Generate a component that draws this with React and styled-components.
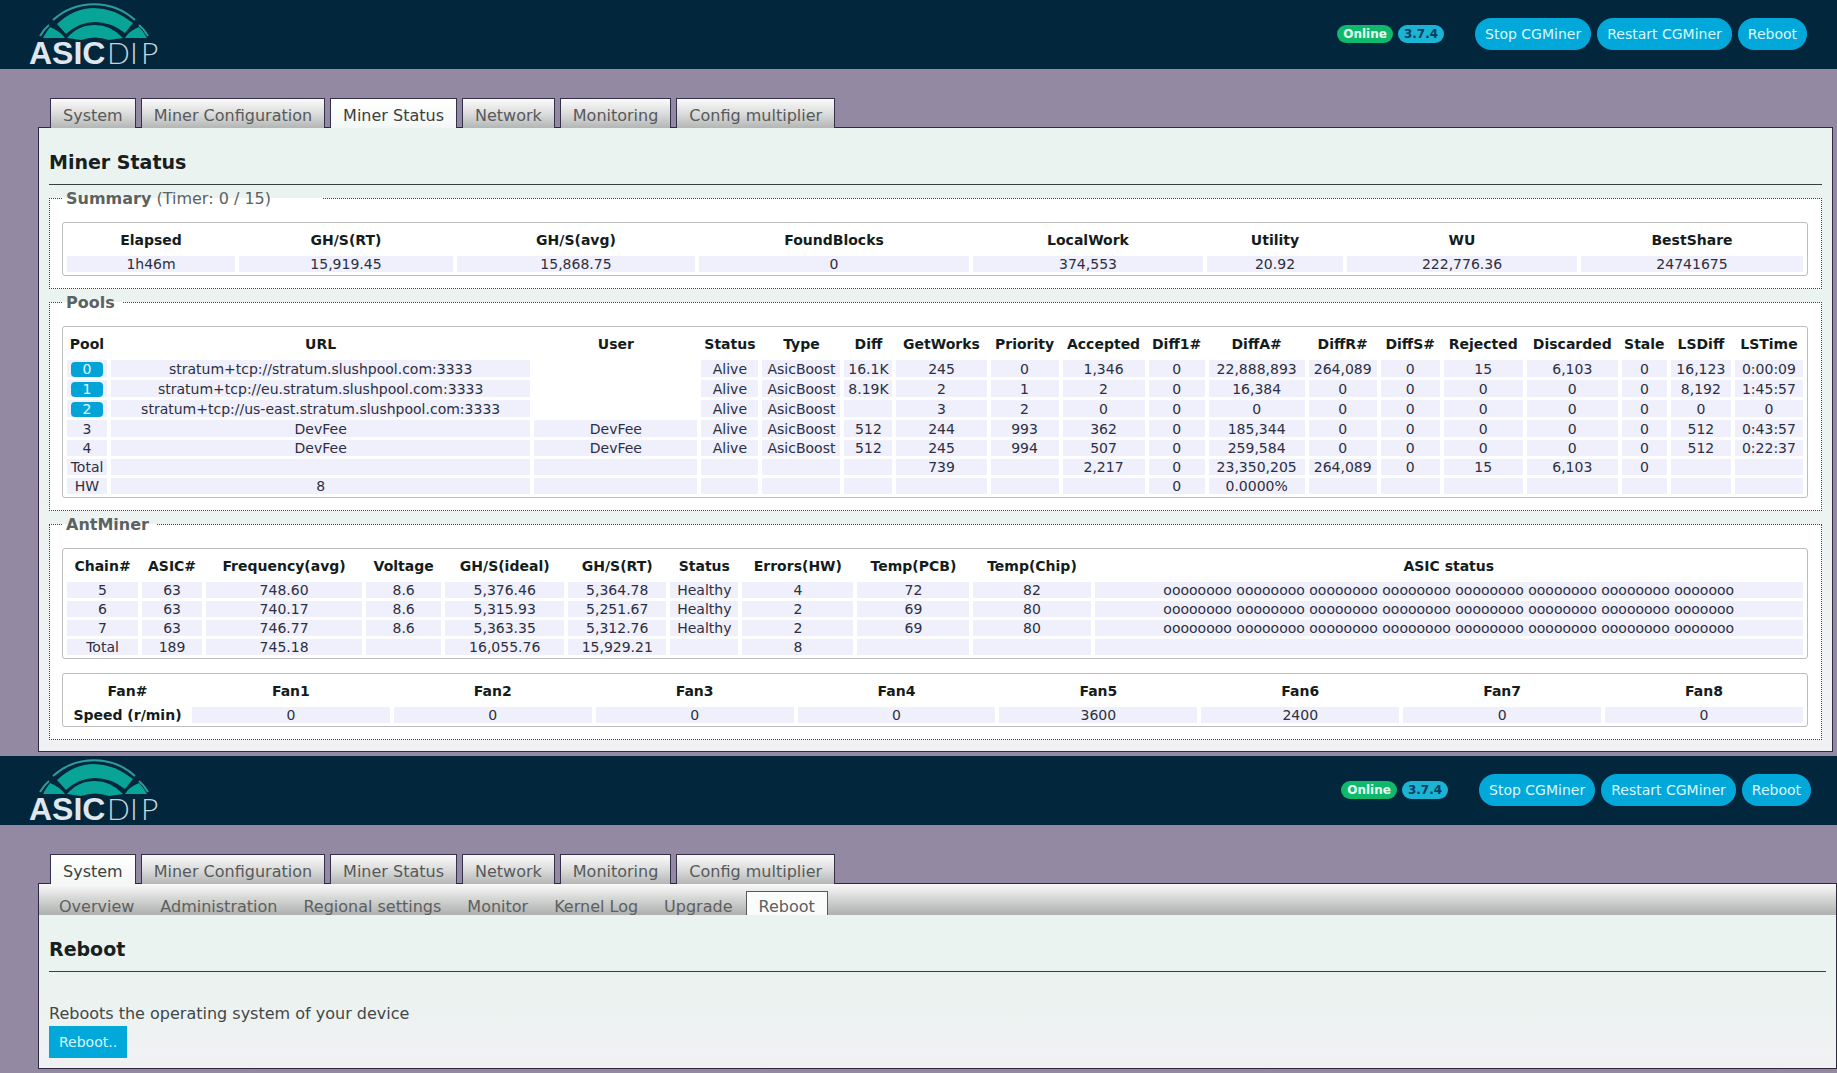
import React from "react";
import styled, { createGlobalStyle, css } from "styled-components";

const GlobalStyle = createGlobalStyle`
  *, *::before, *::after { box-sizing: border-box; }
  body {
    margin: 0;
    background: #9489a3;
    color: #404848;
    font-family: "DejaVu Sans", Verdana, sans-serif;
    font-size: 16px;
  }
`;

const Screen = styled.section`
  padding-bottom: 4px;
`;

const Header = styled.header`
  display: flex;
  align-items: center;
  gap: 31px;
  height: 69px;
  padding: 0 ${(p) => 26 + p.$inset}px 2px 24px;
  background: #02263c;
`;

const LogoLink = styled.a`
  display: block;
  align-self: flex-start;
  margin-right: auto;
  line-height: 0;
`;

const LogoSvg = styled.svg`
  overflow: visible;
`;

const Badges = styled.div`
  display: flex;
  gap: 5px;
`;

const Badge = styled.span`
  padding: 0 6px;
  border-radius: 9px;
  background: ${(p) => (p.$tone === "ok" ? "#10b86c" : "#1cb4d4")};
  color: ${(p) => (p.$tone === "ok" ? "#e4fff2" : "#04405c")};
  font-size: 12px;
  font-weight: bold;
  line-height: 18px;
`;

const Actions = styled.div`
  display: flex;
  gap: 6px;
`;

const Button = styled.button`
  height: 32px;
  padding: 0 10px;
  border: 0;
  border-radius: ${(p) => (p.$pill ? "16px" : "0")};
  background: #02a8da;
  color: #d8f8ff;
  font-family: inherit;
  font-size: 14px;
  cursor: pointer;
`;

const Main = styled.main`
  padding: 29px ${(p) => p.$inset}px 0 38px;
`;

const Tabs = styled.nav`
  position: relative;
  display: flex;
  gap: 5px;
  margin-bottom: -1px;
  padding-left: 12px;
`;

const Tab = styled.a`
  height: 30px;
  padding: 0 12px;
  border: 1px solid #34304a;
  border-bottom: 0;
  background: ${(p) =>
    p.$active
      ? "linear-gradient(#ffffff, #f2f7f5)"
      : "linear-gradient(#fbfbfb, #dcdcdc 50%, #b4b6b6)"};
  color: ${(p) => (p.$active ? "#3c4040" : "#565a5a")};
  font-size: 16px;
  line-height: 34px;
  text-decoration: none;
  white-space: nowrap;
`;

const Panel = styled.div`
  border: 1px solid #2c2a3c;
  background: linear-gradient(#eaf3f0 50%, #f1f1f3);
`;

const SubTabs = styled.nav`
  display: flex;
  height: 31px;
  padding: 7px 0 0 7px;
  overflow: hidden;
  background: linear-gradient(#fafafa, #d6d8d6 45%, #aeb0b0);
`;

const SubTab = styled.a`
  height: 32px;
  padding: 0 12px;
  border: 1px solid transparent;
  color: #5c6060;
  font-size: 16px;
  line-height: 30px;
  text-decoration: none;
  white-space: nowrap;
  ${(p) =>
    p.$active &&
    css`
      border-color: #55585c;
      background: #fafcfb;
    `}
`;

const Content = styled.div`
  padding: 20px 10px 10px;
`;

const Title = styled.h1`
  margin: 0 0 1px;
  padding-bottom: 7px;
  border-bottom: 1px solid #38403f;
  color: #18201f;
  font-size: 19px;
  line-height: 29px;
`;

const Group = styled.fieldset`
  min-width: 0;
  margin: 0 0 1px;
  padding: 12px 13px 12px 12px;
  border: 1px dotted #444;
  background: #fff;
`;

const Legend = styled.legend`
  padding: 2px ${(p) => (p.$wide ? 52 : 8)}px 0 4px;
  color: #5c6262;
  font-size: 16px;
  line-height: 22px;
`;

const Table = styled.table`
  width: 100%;
  table-layout: fixed;
  border: 1px solid #bcbcc0;
  border-radius: 3px;
  border-collapse: separate;
  border-spacing: 4px 3px;
  font-size: 14px;
  line-height: 16px;
  text-align: center;
  white-space: nowrap;

  & + & {
    margin-top: 14px;
  }
`;

const Col = styled.col`
  width: ${(p) => p.$share}%;
`;

const Th = styled.th`
  height: ${(p) => (p.$row ? 16 : 27)}px;
  padding: 0;
  color: #141c1c;
`;

const Td = styled.td`
  height: ${(p) => (p.$tall ? 17 : 16)}px;
  padding: 0;
  background: ${(p) => (p.$blank ? "#fff" : "#f0effc")};
  color: #2c3040;
`;

const PoolBadge = styled.span`
  display: block;
  width: 32px;
  margin: 2px auto 0;
  border-radius: 4px;
  background: #02a4d8;
  color: #e0f8ff;
  line-height: 15px;
`;

const Notice = styled.p`
  margin: 30px 0 0;
  color: #404848;
  font-size: 16px;
  line-height: 24px;
`;

function Logo() {
  return (
    <LogoSvg width="140" height="67" viewBox="24 0 140 67" role="img" aria-label="ASICDIP">
      <g fill="none" stroke="#2f9c9c" strokeWidth="2">
        <path d="M53 20 A61 61 0 0 1 135 20" />
        <path d="M40 36 Q44 29 49 25" />
        <path d="M139 25 Q144 29 148 36" />
      </g>
      <path fill="#08a497" d="M57 24 Q74 8 94 8 Q114 8 133 23 L125 33 Q111 22 95 22 Q79 22 66 34 Z" />
      <path fill="#08a497" d="M67 38 Q78 25 95 25 Q111 25 123 38 L109 40 Q95 35 81 40 Z" />
      <path fill="#08a497" d="M43 38 Q46 32 50 27 Q60 31 65 38 Z" />
      <path fill="#08a497" d="M147 38 Q144 32 139 27 Q129 31 125 38 Z" />
      <text
        x="29"
        y="64"
        fill="#dfe6ee"
        fontFamily="'Liberation Sans', sans-serif"
        fontSize="32"
        fontWeight="700"
      >
        ASIC
      </text>
      <text
        x="107 130 141"
        y="64"
        fill="#c4d4dc"
        fontFamily="Lato, 'Liberation Sans', sans-serif"
        fontSize="30"
        fontWeight="300"
      >
        DIP
      </text>
    </LogoSvg>
  );
}

function TopBar({ inset }) {
  return (
    <Header $inset={inset}>
      <LogoLink href="#home">
        <Logo />
      </LogoLink>
      <Badges>
        <Badge $tone="ok">Online</Badge>
        <Badge>3.7.4</Badge>
      </Badges>
      <Actions>
        <Button type="button" $pill>Stop CGMiner</Button>
        <Button type="button" $pill>Restart CGMiner</Button>
        <Button type="button" $pill>Reboot</Button>
      </Actions>
    </Header>
  );
}

const sections = [
  "System",
  "Miner Configuration",
  "Miner Status",
  "Network",
  "Monitoring",
  "Config multiplier",
];

const systemPages = [
  "Overview",
  "Administration",
  "Regional settings",
  "Monitor",
  "Kernel Log",
  "Upgrade",
  "Reboot",
];

function MainTabs({ active }) {
  return (
    <Tabs aria-label="Sections">
      {sections.map((name) => (
        <Tab key={name} href="#section" $active={name === active}>
          {name}
        </Tab>
      ))}
    </Tabs>
  );
}

function Columns({ weights }) {
  const total = weights.reduce((sum, w) => sum + w, 0);
  return (
    <colgroup>
      {weights.map((w, i) => (
        <Col key={i} $share={(w / total) * 100} />
      ))}
    </colgroup>
  );
}

function DataTable({ weights, heads, children }) {
  return (
    <Table>
      <Columns weights={weights} />
      <thead>
        <tr>
          {heads.map((h) => (
            <Th key={h} scope="col">{h}</Th>
          ))}
        </tr>
      </thead>
      <tbody>{children}</tbody>
    </Table>
  );
}

const summary = {
  weights: [168, 214, 238, 270, 230, 136, 230, 222],
  heads: ["Elapsed", "GH/S(RT)", "GH/S(avg)", "FoundBlocks", "LocalWork", "Utility", "WU", "BestShare"],
  rows: [["1h46m", "15,919.45", "15,868.75", "0", "374,553", "20.92", "222,776.36", "24741675"]],
};

const TALL_POOL_ROWS = 4;

const pools = {
  weights: [40, 419, 163, 57, 78, 48, 90, 68, 82, 56, 96, 68, 59, 79, 91, 45, 60, 68],
  heads: [
    "Pool", "URL", "User", "Status", "Type", "Diff", "GetWorks", "Priority", "Accepted",
    "Diff1#", "DiffA#", "DiffR#", "DiffS#", "Rejected", "Discarded", "Stale", "LSDiff", "LSTime",
  ],
  rows: [
    ["0", "stratum+tcp://stratum.slushpool.com:3333", null, "Alive", "AsicBoost", "16.1K", "245", "0", "1,346", "0", "22,888,893", "264,089", "0", "15", "6,103", "0", "16,123", "0:00:09"],
    ["1", "stratum+tcp://eu.stratum.slushpool.com:3333", null, "Alive", "AsicBoost", "8.19K", "2", "1", "2", "0", "16,384", "0", "0", "0", "0", "0", "8,192", "1:45:57"],
    ["2", "stratum+tcp://us-east.stratum.slushpool.com:3333", null, "Alive", "AsicBoost", "", "3", "2", "0", "0", "0", "0", "0", "0", "0", "0", "0", "0"],
    ["3", "DevFee", "DevFee", "Alive", "AsicBoost", "512", "244", "993", "362", "0", "185,344", "0", "0", "0", "0", "0", "512", "0:43:57"],
    ["4", "DevFee", "DevFee", "Alive", "AsicBoost", "512", "245", "994", "507", "0", "259,584", "0", "0", "0", "0", "0", "512", "0:22:37"],
    ["Total", "", "", "", "", "", "739", "", "2,217", "0", "23,350,205", "264,089", "0", "15", "6,103", "0", "", ""],
    ["HW", "8", "", "", "", "", "", "", "", "0", "0.0000%", "", "", "", "", "", "", ""],
  ],
};

const asics =
  "oooooooo oooooooo oooooooo oooooooo oooooooo oooooooo oooooooo ooooooo";

const chains = {
  weights: [71, 60, 156, 75, 119, 98, 68, 111, 112, 117, 708],
  heads: [
    "Chain#", "ASIC#", "Frequency(avg)", "Voltage", "GH/S(ideal)", "GH/S(RT)",
    "Status", "Errors(HW)", "Temp(PCB)", "Temp(Chip)", "ASIC status",
  ],
  rows: [
    ["5", "63", "748.60", "8.6", "5,376.46", "5,364.78", "Healthy", "4", "72", "82", asics],
    ["6", "63", "740.17", "8.6", "5,315.93", "5,251.67", "Healthy", "2", "69", "80", asics],
    ["7", "63", "746.77", "8.6", "5,363.35", "5,312.76", "Healthy", "2", "69", "80", asics],
    ["Total", "189", "745.18", "", "16,055.76", "15,929.21", "", "8", "", "", ""],
  ],
};

const fans = {
  weights: [121, 198, 198, 198, 198, 198, 198, 198, 198],
  heads: ["Fan#", "Fan1", "Fan2", "Fan3", "Fan4", "Fan5", "Fan6", "Fan7", "Fan8"],
  speeds: ["0", "0", "0", "0", "3600", "2400", "0", "0"],
};

function Rows({ rows }) {
  return rows.map((row, r) => (
    <tr key={r}>
      {row.map((value, c) => (
        <Td key={c}>{value}</Td>
      ))}
    </tr>
  ));
}

function PoolRows() {
  return pools.rows.map((row, r) => (
    <tr key={r}>
      {row.map((value, c) => (
        <Td key={c} $tall={r < TALL_POOL_ROWS} $blank={value === null}>
          {c === 0 && row[2] === null ? <PoolBadge>{value}</PoolBadge> : value}
        </Td>
      ))}
    </tr>
  ));
}

function MinerStatus() {
  return (
    <Screen>
      <TopBar inset={4} />
      <Main $inset={4}>
        <MainTabs active="Miner Status" />
        <Panel>
          <Content>
            <Title>Miner Status</Title>
            <Group>
              <Legend $wide>
                <b>Summary</b> (Timer: 0 / 15)
              </Legend>
              <DataTable weights={summary.weights} heads={summary.heads}>
                <Rows rows={summary.rows} />
              </DataTable>
            </Group>
            <Group>
              <Legend>
                <b>Pools</b>
              </Legend>
              <DataTable weights={pools.weights} heads={pools.heads}>
                <PoolRows />
              </DataTable>
            </Group>
            <Group>
              <Legend>
                <b>AntMiner</b>
              </Legend>
              <DataTable weights={chains.weights} heads={chains.heads}>
                <Rows rows={chains.rows} />
              </DataTable>
              <DataTable weights={fans.weights} heads={fans.heads}>
                <tr>
                  <Th scope="row" $row>Speed (r/min)</Th>
                  {fans.speeds.map((speed, i) => (
                    <Td key={i}>{speed}</Td>
                  ))}
                </tr>
              </DataTable>
            </Group>
          </Content>
        </Panel>
      </Main>
    </Screen>
  );
}

function RebootPage() {
  return (
    <Screen>
      <TopBar inset={0} />
      <Main $inset={0}>
        <MainTabs active="System" />
        <Panel>
          <SubTabs aria-label="System pages">
            {systemPages.map((name) => (
              <SubTab key={name} href="#page" $active={name === "Reboot"}>
                {name}
              </SubTab>
            ))}
          </SubTabs>
          <Content>
            <Title as="h2">Reboot</Title>
            <Notice>Reboots the operating system of your device</Notice>
            <Button type="button">Reboot..</Button>
          </Content>
        </Panel>
      </Main>
    </Screen>
  );
}

export default function App() {
  return (
    <>
      <GlobalStyle />
      <MinerStatus />
      <RebootPage />
    </>
  );
}
